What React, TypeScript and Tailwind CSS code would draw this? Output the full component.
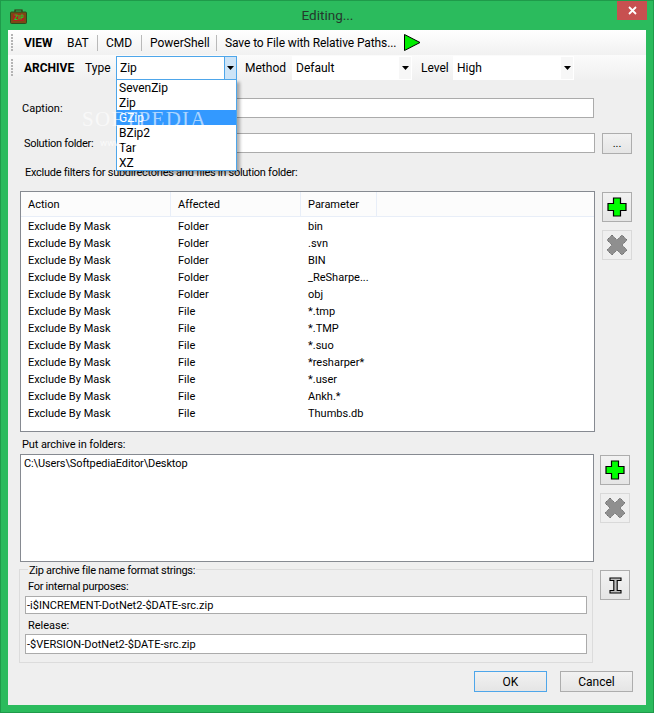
import React from "react";

const rows: [string, string, string][] = [
  ["Exclude By Mask", "Folder", "bin"],
  ["Exclude By Mask", "Folder", ".svn"],
  ["Exclude By Mask", "Folder", "BIN"],
  ["Exclude By Mask", "Folder", "_ReSharpe..."],
  ["Exclude By Mask", "Folder", "obj"],
  ["Exclude By Mask", "File", "*.tmp"],
  ["Exclude By Mask", "File", "*.TMP"],
  ["Exclude By Mask", "File", "*.suo"],
  ["Exclude By Mask", "File", "*resharper*"],
  ["Exclude By Mask", "File", "*.user"],
  ["Exclude By Mask", "File", "Ankh.*"],
  ["Exclude By Mask", "File", "Thumbs.db"],
];

const Grip = () => (
  <div className="flex flex-col gap-[1px] ml-[3px] mr-[10px] w-[2px]">
    {[0, 1, 2, 3, 4, 5].map((i) => (
      <div key={i} className="w-[2px] h-[2px] bg-[#b4b4b4]" />
    ))}
  </div>
);

const Sep = () => <div className="w-px h-[16px] bg-[#b9b9b9] mx-[8px]" />;

const Arrow = () => (
  <svg width="7" height="4" viewBox="0 0 7 4"><path d="M0 0h7L3.5 4z" fill="#000" /></svg>
);

const PlainCombo = ({ text, w }: { text: string; w: string }) => (
  <div className={`${w} h-[24px] bg-white flex items-center justify-between pl-[4px] pr-[1px] text-[12px]`}>
    <span>{text}</span>
    <div className="w-[12px] h-[22px] bg-[#f7f7f7] flex items-center justify-center"><Arrow /></div>
  </div>
);

const IconBtn = ({ children, dim }: { children: React.ReactNode; dim?: boolean }) => (
  <div className={`w-[30px] h-[30px] border flex items-center justify-center ${dim ? "border-[#d9d9d9] bg-[#efefef]" : "border-[#adadad] bg-gradient-to-b from-[#f2f2f2] to-[#e5e5e5]"}`}>
    {children}
  </div>
);

const Plus = () => (
  <svg width="20" height="20" viewBox="0 0 20 20">
    <path d="M6.5 1h7v5.5H19v7h-5.5V19h-7v-5.5H1v-7h5.5z" fill="#00ff00" stroke="#000" strokeWidth="1.2" />
  </svg>
);

const Cross = () => (
  <svg width="22" height="22" viewBox="0 0 22 22">
    <path d="M6 1l5 5 5-5 5 5-5 5 5 5-5 5-5-5-5 5-5-5 5-5-5-5z" fill="#8f8f8f" stroke="#6e6e6e" strokeWidth="1" strokeDasharray="1.5 0.7" />
  </svg>
);

const IBeam = () => (
  <svg width="13" height="17" viewBox="0 0 13 17">
    <path d="M1 1h11v2.5H8.2v10H12V16H1v-2.5h3.8v-10H1z" fill="#bdbdbd" stroke="#000" strokeWidth="1.1" />
  </svg>
);

const Play = () => (
  <svg width="17" height="17" viewBox="0 0 17 17">
    <path d="M.5.5L16 8.5.5 16.5z" fill="#00ee00" stroke="#000" strokeWidth="1" />
  </svg>
);

const ZipIcon = () => (
  <svg width="17" height="15" viewBox="0 0 17 15">
    <path d="M5 3V1h7v2" fill="none" stroke="#3c2a10" strokeWidth="1.2" />
    <rect x="0.5" y="3" width="16" height="11.5" rx="1" fill="#7a4a14" stroke="#2c4a1c" />
    <rect x="3" y="5" width="11" height="7" fill="#b02020" />
    <path d="M4.5 6h3l-3 4.5h3M9 6v4.5M11 10.5V6h2v2.5h-2" fill="none" stroke="#22cc22" strokeWidth="1" />
  </svg>
);

const TextBox = ({ className, children }: { className: string; children?: React.ReactNode }) => (
  <div className={`bg-white border border-[#ababab] flex items-center ${className}`}>{children}</div>
);

export default function App() {
  return (
    <div
      className="relative w-[654px] h-[713px] bg-[#2bbb5d] border border-[#1f9a4a] flex flex-col text-[11px] leading-none text-black overflow-hidden"
      style={{ fontFamily: 'Roboto, "Noto Sans", sans-serif' }}
    >
      {/* title bar */}
      <div className="h-[29px] shrink-0 flex items-center relative">
        <div className="ml-[9px] mt-[2px] flex"><ZipIcon /></div>
        <div className="flex-1 text-center text-[13.5px] text-[#24382c] -ml-[25px]">Editing...</div>
        <div className="absolute top-0 right-[6px] w-[30px] h-[19px] bg-[#c75050] flex items-center justify-center">
          <svg width="9" height="9" viewBox="0 0 9 9"><path d="M1 1l7 7M8 1L1 8" stroke="#fff" strokeWidth="1.8" /></svg>
        </div>
      </div>

      {/* client */}
      <div className="relative w-[638px] h-[675px] ml-[7px] bg-[#efefef] flex flex-col">
        {/* toolbar 1 */}
        <div className="h-[25px] shrink-0 flex items-center text-[12px] bg-gradient-to-b from-[#ffffff] to-[#f1f1f1]">
          <Grip />
          <span className="font-bold mr-[13px] ml-[1px] w-[30px]">VIEW</span>
          <span className="w-[22px]">BAT</span>
          <Sep />
          <span className="w-[27px]">CMD</span>
          <Sep />
          <span className="w-[58px] whitespace-nowrap">PowerShell</span>
          <Sep />
          <span className="w-[171px] whitespace-nowrap tracking-[-0.1px]">Save to File with Relative Paths...</span>
          <span className="ml-[8px] flex"><Play /></span>
        </div>
        {/* toolbar 2 */}
        <div className="h-[25px] shrink-0 flex items-center text-[12px] bg-gradient-to-b from-[#fbfbfb] to-[#f0f0f0]">
          <Grip />
          <span className="font-bold ml-[1px] w-[61px]">ARCHIVE</span>
          <span className="w-[31px]">Type</span>
          <div className="w-[121px] h-[24px] bg-white border border-[#4ea6ea] flex items-center justify-between pl-[3px]">
            <span>Zip</span>
            <div className="w-[12px] h-full bg-[#cde4f7] border-l border-[#4ea6ea] flex items-center justify-center"><Arrow /></div>
          </div>
          <span className="ml-[8px] mr-[5px] w-[42px]">Method</span>
          <PlainCombo text="Default" w="w-[120px]" />
          <span className="ml-[9px] mr-[5px] w-[27px]">Level</span>
          <PlainCombo text="High" w="w-[121px]" />
        </div>

        {/* form */}
        <div className="pl-[12px] flex flex-col flex-1">
          <div className="flex items-center h-[20px] mt-[18px]">
            <span className="ml-[2px] w-[106px]">Caption:</span>
            <TextBox className="w-[466px] h-[20px]" />
          </div>
          <div className="flex items-center h-[22px] mt-[14px]">
            <span className="ml-[4px] w-[104px] tracking-[-0.3px]">Solution folder:</span>
            <TextBox className="w-[467px] h-[20px]" />
            <div className="ml-[7px] w-[30px] h-[21px] border border-[#adadad] bg-gradient-to-b from-[#f2f2f2] to-[#e5e5e5] flex items-center justify-center">...</div>
          </div>
          <div className="ml-[5px] mt-[11px] h-[14px] flex items-center whitespace-nowrap tracking-[-0.27px]">Exclude filters for subdirectories and files in solution folder:</div>

          {/* filter table */}
          <div className="flex mt-[12px]">
            <div className="w-[575px] h-[241px] bg-white border border-[#868a91]">
              <div className="h-[25px] flex bg-[#fcfcfc] border-b border-[#e8eef8]">
                <div className="w-[150px] pl-[7px] flex items-center border-r border-[#e8eef8]">Action</div>
                <div className="w-[130px] pl-[7px] flex items-center border-r border-[#e8eef8]">Affected</div>
                <div className="w-[76px] pl-[7px] flex items-center border-r border-[#e8eef8]">Parameter</div>
              </div>
              <div className="pt-[1px]">
                {rows.map((r, i) => (
                  <div key={i} className="h-[17px] flex items-center">
                    <span className="w-[150px] pl-[7px]">{r[0]}</span>
                    <span className="w-[130px] pl-[7px]">{r[1]}</span>
                    <span className="pl-[7px]">{r[2]}</span>
                  </div>
                ))}
              </div>
            </div>
            <div className="ml-[7px] flex flex-col gap-[8px] mt-[1px]">
              <IconBtn><Plus /></IconBtn>
              <IconBtn dim><Cross /></IconBtn>
            </div>
          </div>

          {/* archive folders */}
          <div className="ml-[2px] mt-[6px] h-[12px] flex items-center tracking-[-0.1px]">Put archive in folders:</div>
          <div className="flex mt-[4px]">
            <div className="w-[574px] h-[108px] bg-white border border-[#868a91] pl-[3px] pt-[3px] tracking-[-0.12px]">
              C:\Users\SoftpediaEditor\Desktop
            </div>
            <div className="ml-[6px] flex flex-col gap-[8px] mt-[1px]">
              <IconBtn><Plus /></IconBtn>
              <IconBtn dim><Cross /></IconBtn>
            </div>
          </div>

          {/* group */}
          <div className="flex mt-[7px] -ml-[1px]">
            <div className="w-[574px] h-[94px] border border-[#dcdcdc] flex flex-col pl-[5px]">
              <div className="-mt-[7px] ml-[3px] w-fit px-[1px] bg-[#efefef] h-[14px] flex items-center tracking-[-0.27px]">Zip archive file name format strings:</div>
              <div className="ml-[3px] mt-[2px] h-[14px] flex items-center tracking-[-0.27px]">For internal purposes:</div>
              <TextBox className="w-[562px] h-[18px] mt-[3px] pl-[1px]">-i$INCREMENT-DotNet2-$DATE-src.zip</TextBox>
              <div className="ml-[3px] mt-[4px] h-[14px] flex items-center">Release:</div>
              <TextBox className="w-[562px] h-[20px] mt-[2px] pl-[1px]">-$VERSION-DotNet2-$DATE-src.zip</TextBox>
            </div>
            <div className="ml-[7px] mt-[1px]">
              <IconBtn><IBeam /></IconBtn>
            </div>
          </div>

          {/* footer */}
          <div className="flex justify-end gap-[13px] pr-[13px] mt-[8px] text-[12px]">
            <div className="w-[73px] h-[21px] border border-[#4ea6ea] bg-gradient-to-b from-[#f2f2f2] to-[#e5e5e5] flex items-center justify-center">OK</div>
            <div className="w-[73px] h-[21px] border border-[#adadad] bg-gradient-to-b from-[#f2f2f2] to-[#e5e5e5] flex items-center justify-center">Cancel</div>
          </div>
        </div>

        {/* dropdown overlay */}
        <div className="absolute left-[108px] top-[49px] w-[121px] h-[92px] bg-white border border-[#4ea6ea] shadow-[3px_3px_3px_rgba(0,0,0,0.3)] text-[12px]">
          {["SevenZip", "Zip", "GZip", "BZip2", "Tar", "XZ"].map((t) => (
            <div key={t} className={`h-[15px] pl-[2px] flex items-center ${t === "GZip" ? "bg-[#3399ff] text-white" : ""}`}>{t}</div>
          ))}
        </div>
        {/* watermark */}
        <div className="absolute left-[74px] top-[79px] text-[21px] tracking-[1.3px] text-white/60 pointer-events-none" style={{ fontFamily: '"Liberation Serif", serif' }}>SOFTPEDIA</div>
        <div className="absolute left-[92px] top-[108px] text-[9.5px] text-white/70 pointer-events-none">www.softpedia.com</div>
      </div>
    </div>
  );
}
